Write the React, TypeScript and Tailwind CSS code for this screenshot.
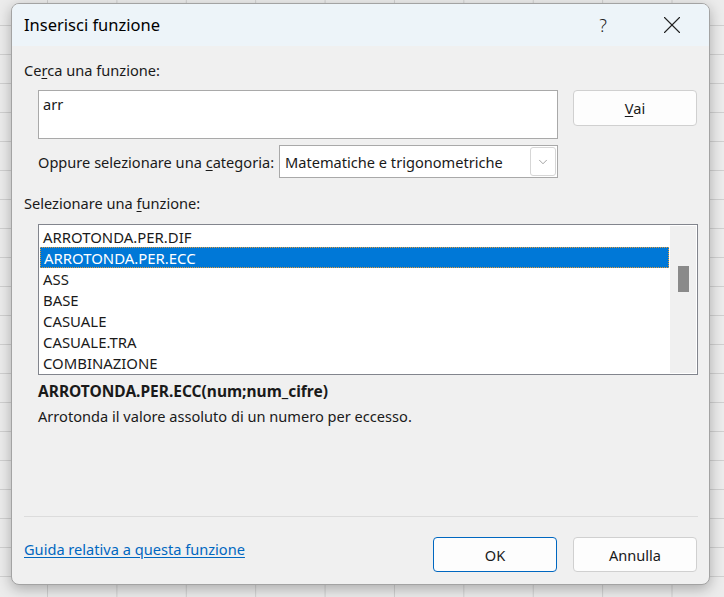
import { X, ChevronDown } from "lucide-react";

const functions = [
  "ARROTONDA.PER.DIF",
  "ARROTONDA.PER.ECC",
  "ASS",
  "BASE",
  "CASUALE",
  "CASUALE.TRA",
  "COMBINAZIONE",
];

export default function App() {
  const selected = "ARROTONDA.PER.ECC";

  return (
    <div
      className="relative w-[724px] h-[597px] overflow-hidden bg-[#ececec] bg-[linear-gradient(to_right,#d0d0d0_1px,transparent_1px),linear-gradient(to_bottom,#d0d0d0_1px,transparent_1px)] bg-size-[69.4px_29px] bg-position-[47px_25px]"
      style={{ fontFamily: '"Noto Sans", "Open Sans", sans-serif' }}
    >
      {/* Dialog */}
      <div className="absolute left-[11px] top-[3px] w-[699px] h-[582px] flex flex-col rounded-[8px] border border-[#a3a3a3] bg-[#f0f0f0] overflow-hidden shadow-[0_4px_14px_rgba(0,0,0,0.28)] text-[#1a1a1a]">
        {/* Title bar */}
        <div className="h-[42px] shrink-0 flex items-center bg-[#edf4f9] pl-3 pr-[22px]">
          <span className="text-[16.5px] text-black">Inserisci funzione</span>
          <span className="ml-auto text-[18px] font-light text-[#222]">?</span>
          <X size={30} strokeWidth={0.9} className="ml-[50px] text-[#222]" />
        </div>

        {/* Body */}
        <div className="flex-1 flex flex-col pl-3 pr-[11px] text-[14.6px] leading-[20px]">
          <div className="mt-[14px]">
            Ce<u className="underline-offset-2">r</u>ca una funzione:
          </div>

          <div className="mt-[10px] flex gap-[15px] ml-[14px]">
            <div className="w-[520px] flex flex-col">
              <div className="h-[49px] bg-white border border-[#a9a9a9] px-1 pt-[3px]">arr</div>
              <div className="mt-[6px] flex items-center">
                <span className="flex-1">
                  Oppure selezionare una <u className="underline-offset-2">c</u>ategoria:
                </span>
                <div className="w-[279px] h-[33px] bg-white border border-[#a9a9a9] flex items-center pl-[5px] pr-px">
                  <span className="flex-1">Matematiche e trigonometriche</span>
                  <div className="w-[26px] h-[29px] border border-[#d6d6d6] rounded-[3px] flex items-center justify-center text-[#707070]">
                    <ChevronDown size={14} strokeWidth={1.1} />
                  </div>
                </div>
              </div>
            </div>
            <button className="w-[124px] h-[36px] bg-[#fdfdfd] border border-[#d0d0d0] rounded-[4px]">
              <u className="underline-offset-2">V</u>ai
            </button>
          </div>

          <div className="mt-[15px]">
            Selezionare una <u className="underline-offset-2">f</u>unzione:
          </div>

          <div className="mt-[11px] ml-[14px] h-[151px] bg-white border border-[#82858d] flex p-px text-[14.9px]">
            <div className="flex-1 flex flex-col pr-px">
              {functions.map((f) => (
                <div
                  key={f}
                  className={`h-[21px] flex items-center px-[3px] ${
                    f === selected
                      ? "bg-[#0078d7] text-white border border-dotted border-[#e39b3a]"
                      : ""
                  }`}
                >
                  {f}
                </div>
              ))}
            </div>
            <div className="w-[26px] bg-[#f0f0f0] flex flex-col items-center">
              <div className="mt-[40px] w-[11px] h-[26px] bg-[#8a8a8a]" />
            </div>
          </div>

          <div className="mt-[6px] ml-[14px] font-bold text-[15.5px]">ARROTONDA.PER.ECC(num;num_cifre)</div>
          <div className="mt-[5px] ml-[14px]">Arrotonda il valore assoluto di un numero per eccesso.</div>

          <div className="mt-auto h-px bg-[#dcdcdc]" />

          <div className="h-[67px] flex items-start pr-px">
            <a className="mt-[22px] text-[#0067c0] underline underline-offset-2">
              Guida relativa a questa funzione
            </a>
            <button className="ml-auto mt-[20px] w-[124px] h-[35px] bg-[#fdfdfd] border border-[#0067c0] rounded-[4px]">
              OK
            </button>
            <button className="ml-[16px] mt-[20px] w-[124px] h-[35px] bg-[#fdfdfd] border border-[#d0d0d0] rounded-[4px]">
              Annulla
            </button>
          </div>
        </div>
      </div>
    </div>
  );
}
